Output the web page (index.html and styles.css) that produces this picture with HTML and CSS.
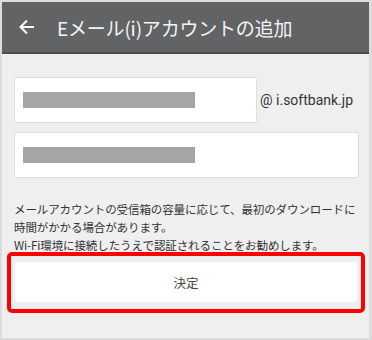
FILE: index.html
```html
<!DOCTYPE html>
<html lang="ja">
<head>
    <meta charset="UTF-8">
    <meta name="viewport" content="width=device-width, initial-scale=1.0">
    <title>Eメール(i)アカウントの追加</title>
    <link rel="stylesheet" href="styles.css">
</head>
<body>
    <div class="screen">
        <!-- Kopfzeile -->
        <header class="header">
            <svg class="back" width="16" height="16" viewBox="0 0 16 16">
                <path d="M15 8H2M8 1.5L1.5 8L8 14.5" fill="none" stroke="#fff" stroke-width="2"/>
            </svg>
            <h1>Eメール(i)アカウントの追加</h1>
        </header>

        <main class="content">
            <div class="row">
                <div class="field short"><span class="mask"></span></div>
                <span class="domain">@ i.softbank.jp</span>
            </div>
            <div class="field"><span class="mask"></span></div>

            <p class="note">メールアカウントの受信箱の容量に応じて、最初のダウンロードに時間がかかる場合があります。<br>Wi-Fi環境に接続したうえで認証されることをお勧めします。</p>

            <div class="highlight">
                <button class="ok-button">決定</button>
            </div>
        </main>
    </div>
</body>
</html>
```

FILE: styles.css
```css
* {
    margin: 0;
    padding: 0;
    box-sizing: border-box;
    font-family: "Noto Sans CJK JP", "Noto Sans", sans-serif;
}

body {
    width: 372px;
    height: 340px;
    overflow: hidden;
}

.screen {
    width: 372px;
    height: 340px;
    border: solid #dcdcdc;
    border-width: 2px 3px 2px 2px;
    background-color: #efefef;
}

/* Kopfzeile */
.header {
    display: flex;
    align-items: center;
    height: 52px;
    padding-left: 17px;
    background-color: #626365;
    border-bottom: 2px solid #4c4d4f;
}

.back {
    flex-shrink: 0;
}

.header h1 {
    margin-left: 22px;
    font-size: 19px;
    font-weight: normal;
    color: #f4f4f4;
    letter-spacing: -0.2px;
}

.content {
    padding: 23px 10px 0 12px;
}

.row {
    display: flex;
    align-items: center;
}

.field {
    height: 46px;
    display: flex;
    align-items: center;
    padding-left: 8px;
    background-color: #fff;
    border: 1px solid #dedede;
    border-radius: 2px;
}

.short {
    width: 243px;
}

.row + .field {
    margin-top: 9px;
}

.mask {
    width: 172px;
    height: 16px;
    background-color: #a5a5a5;
}

.domain {
    margin-left: 3px;
    font-family: Roboto, "Liberation Sans", sans-serif;
    font-size: 14px;
    color: #333;
}

.note {
    margin-top: 22px;
    font-size: 11.5px;
    line-height: 18px;
    color: #333;
    letter-spacing: -0.1px;
}

.highlight {
    margin: -2px -6px 0 -7px;
    padding: 6px 4px 7px 4px;
    border: 4px solid #ff0000;
    border-radius: 5px;
}

.ok-button {
    display: block;
    width: 100%;
    height: 40px;
    background-color: #fff;
    border: none;
    border-radius: 4px;
    font-size: 12.5px;
    color: #444;
}
```
